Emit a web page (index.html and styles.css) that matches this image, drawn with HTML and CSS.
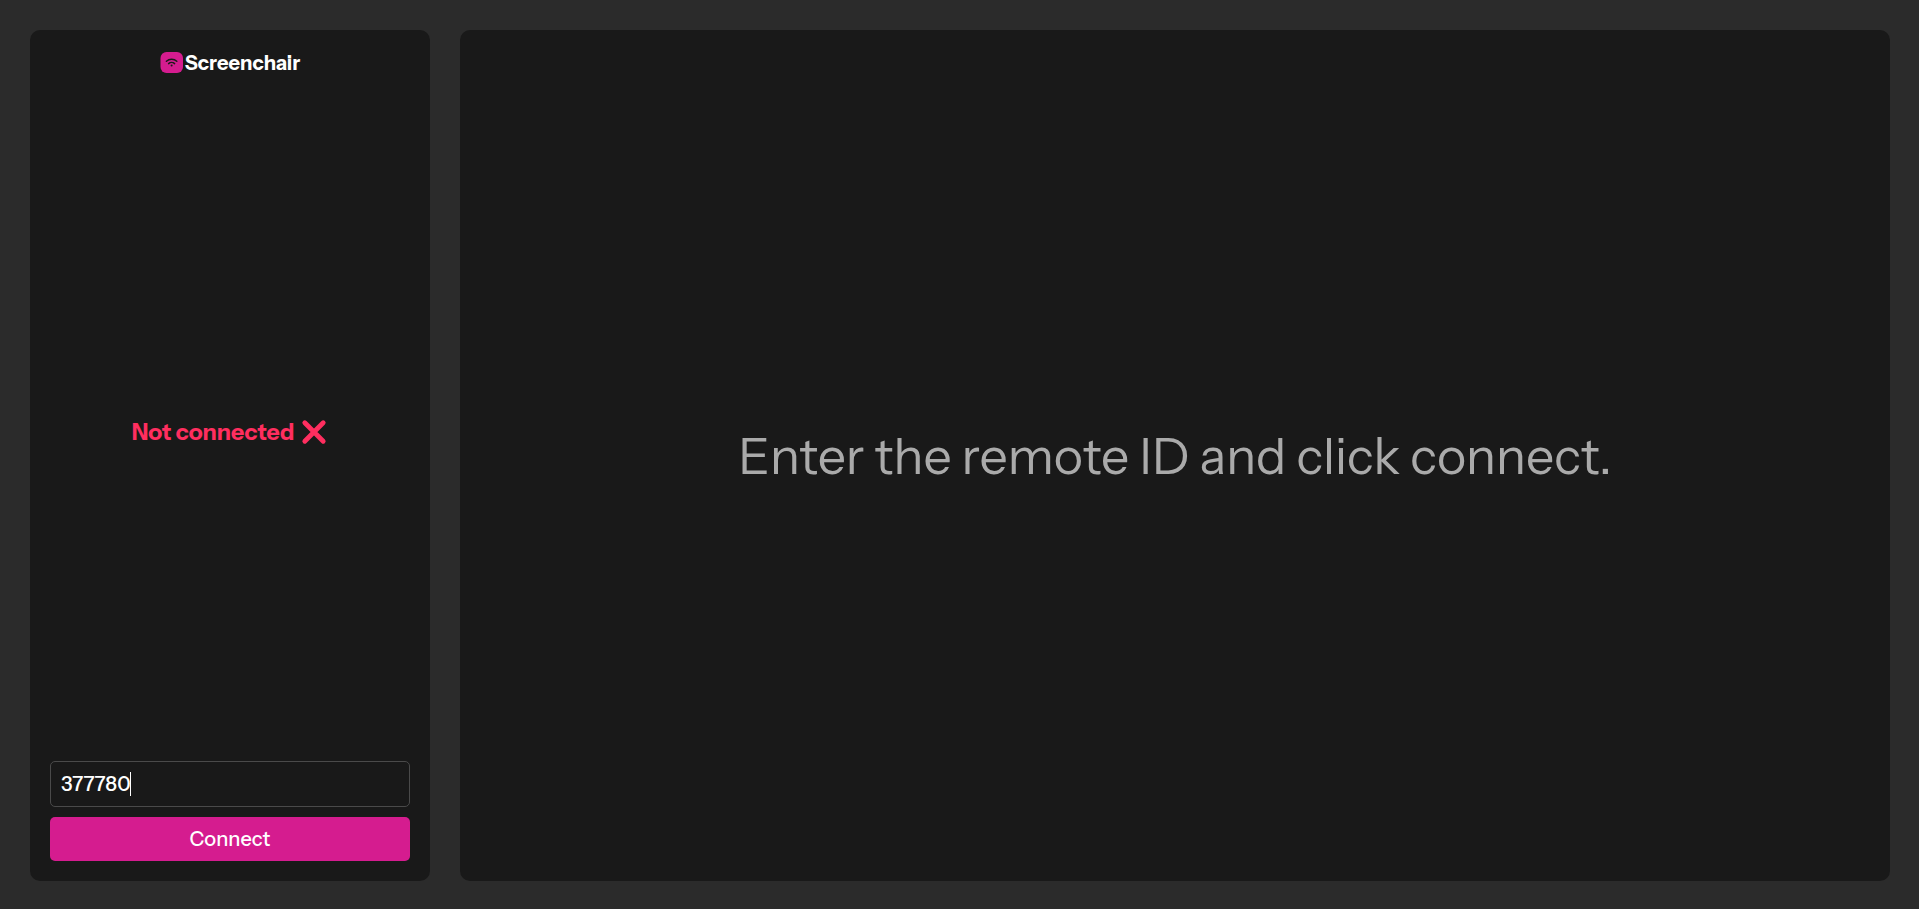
FILE: index.html
```html
<!DOCTYPE html>
<html lang="en">
<head>
    <meta charset="UTF-8">
    <meta name="viewport" content="width=device-width, initial-scale=1.0">
    <title>Screenchair</title>
    <link rel="stylesheet" href="styles.css">
</head>
<body>
    <aside class="sidebar">
        <h1 class="logo">
            <svg class="logo-icon" viewBox="0 0 23 22" aria-hidden="true">
                <rect x="0.5" width="22.5" height="21" rx="6" fill="#d51c8f"/>
                <g fill="none" stroke="#1a1a1a" stroke-width="1.5" stroke-linecap="round">
                    <path d="M6.4 9.2a7.6 7.6 0 0 1 10.4 0"/>
                    <path d="M8.6 11.6a4.4 4.4 0 0 1 6 0"/>
                </g>
                <circle cx="11.6" cy="13.4" r="1" fill="#1a1a1a"/>
            </svg>
            Screenchair
        </h1>

        <p class="status">
            Not connected
            <svg class="status-icon" viewBox="0 0 28 28" aria-hidden="true">
                <path d="M4.8 4.8l18.4 18.4M23.2 4.8l-18.4 18.4" fill="none" stroke="currentColor" stroke-width="4.8" stroke-linecap="round"/>
            </svg>
        </p>

        <form class="connect-form" id="connect-form">
            <div class="field">
                <input type="text" class="remote-id" id="remote-id" aria-label="Remote ID" value="377780" autocomplete="off" autofocus>
                <span class="caret" id="caret"></span>
            </div>
            <button type="submit" class="connect-btn">Connect</button>
        </form>
    </aside>

    <main class="screen">
        <p class="hint">Enter the remote ID and click connect.</p>
    </main>

    <script>
        const remoteId = document.getElementById('remote-id');
        const caret = document.getElementById('caret');

        remoteId.focus();
        remoteId.setSelectionRange(remoteId.value.length, remoteId.value.length);

        // Switch back to the native caret once the user edits or moves it
        function useNativeCaret() {
            caret.hidden = true;
            remoteId.classList.add('editing');
        }

        remoteId.addEventListener('keydown', useNativeCaret);
        remoteId.addEventListener('mousedown', useNativeCaret);
        remoteId.addEventListener('blur', useNativeCaret);

        document.getElementById('connect-form').addEventListener('submit', function(e) {
            e.preventDefault();
        });
    </script>
</body>
</html>
```
FILE: styles.css
```css
* {
    box-sizing: border-box;
    margin: 0;
    padding: 0;
}

body {
    display: flex;
    gap: 30px;
    min-height: 100vh;
    padding: 30px 29px 28px 30px;
    background-color: #2b2b2b;
    color: #fff;
    font-family: 'Instrument Sans', 'Inter', sans-serif;
}

.sidebar,
.screen {
    background-color: #191919;
    border-radius: 10px;
}

.sidebar {
    display: flex;
    flex-direction: column;
    justify-content: space-between;
    flex: 0 0 400px;
    padding: 20px;
}

.logo {
    display: flex;
    align-items: center;
    justify-content: center;
    gap: 2px;
    margin-bottom: 26px;
    font-size: 20px;
    line-height: 26px;
    font-weight: 700;
}

.logo-icon {
    width: 23px;
    height: 22px;
}

.status {
    display: flex;
    align-items: center;
    justify-content: center;
    gap: 6px;
    color: #ff2e5f;
    font-size: 23px;
    line-height: 28px;
    font-weight: 700;
}

.status-icon {
    width: 28px;
    height: 28px;
}

.connect-form {
    display: flex;
    flex-direction: column;
    gap: 10px;
}

.field {
    position: relative;
    display: flex;
}

.remote-id,
.connect-btn {
    width: 100%;
    padding: 10px;
    border-radius: 5px;
    color: #fff;
    font-family: inherit;
    font-size: 20px;
    line-height: 24px;
    font-weight: 500;
}

.remote-id {
    height: 46px;
    border: 1px solid #4a4a4a;
    background-color: transparent;
    outline: none;
    caret-color: transparent;
}

.remote-id.editing {
    caret-color: #fff;
}

.caret {
    position: absolute;
    top: 11px;
    left: 80px;
    width: 1px;
    height: 24px;
    background-color: #fff;
    pointer-events: none;
}

.caret[hidden] {
    display: none;
}

.connect-btn {
    border: none;
    background-color: #d51c8f;
    cursor: pointer;
}

.screen {
    display: flex;
    align-items: center;
    justify-content: center;
    flex: 1;
    padding: 20px;
}

.hint {
    color: #aaa;
    font-size: 50px;
    line-height: 60px;
}
```
